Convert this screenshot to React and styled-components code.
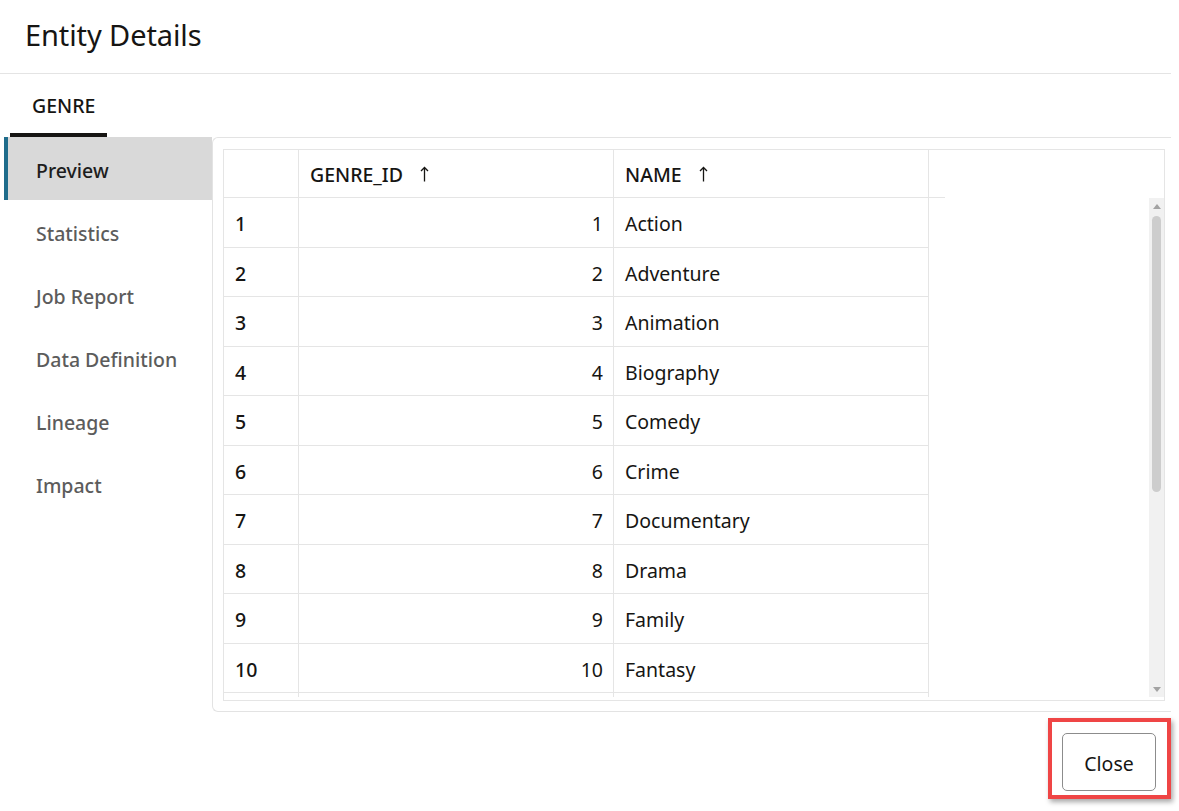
import styled, { createGlobalStyle } from 'styled-components'

const GlobalStyle = createGlobalStyle`
body {
  margin: 0;
  background: #ffffff;
  font-family: "Noto Sans", "Open Sans", sans-serif;
  color: #161513;
}
`

const Dialog = styled.div`
width: 1171px;
height: 811px;
display: flex;
flex-direction: column;
background: #fff;
`

const Header = styled.div`
height: 73px;
box-sizing: content-box;
border-bottom: 1px solid #e4e4e4;
display: flex;
align-items: center;
padding-left: 25px;
`

const Title = styled.h1`
margin: 0 0 4px;
font-size: 29px;
font-weight: 400;
color: #161513;
letter-spacing: -0.1px;
`

const TabBar = styled.div`
height: 63px;
display: flex;
align-items: stretch;
padding-left: 10px;
`

const Tab = styled.div`
width: 97px;
box-sizing: border-box;
padding: 4px 0 0 22px;
display: flex;
align-items: center;
font-size: 19.5px;
font-weight: 500;
color: #161513;
border-bottom: 4px solid ${p => (p.$active ? '#161513' : 'transparent')};
`

const Body = styled.div`
display: flex;
height: 575px;
`

const Nav = styled.nav`
width: 212px;
padding-left: 4px;
box-sizing: border-box;
display: flex;
flex-direction: column;
`

const NavItem = styled.div`
height: 63px;
display: flex;
align-items: center;
box-sizing: border-box;
padding: 3px 0 0 28px;
border-left: 4px solid ${p => (p.$active ? '#1f6c8b' : 'transparent')};
background: ${p => (p.$active ? '#d9d9d9' : 'transparent')};
color: ${p => (p.$active ? '#1d1d1d' : '#5c5c5c')};
font-size: 19.5px;
font-weight: 500;
`

const Panel = styled.div`
flex: 1;
border: 1px solid #e3e3e3;
border-right: none;
border-radius: 6px 0 0 6px;
padding: 11px 6px 10px 10px;
box-sizing: border-box;
`

const Grid = styled.div`
height: 552px;
border: 1px solid #e5e5e5;
box-sizing: border-box;
display: flex;
flex-direction: column;
padding-bottom: 3px;
`

const HeaderRow = styled.div`
display: flex;
width: 721px;
height: 48px;
flex-shrink: 0;
border-bottom: 1px solid #e5e5e5;
box-sizing: border-box;
`

const HeadCell = styled.div`
width: ${p => p.$w}px;
box-sizing: border-box;
border-right: ${p => (p.$last ? 'none' : '1px solid #e5e5e5')};
display: flex;
align-items: center;
padding: 1px 0 0 11px;
font-size: 19.5px;
font-weight: 500;
color: #161513;
gap: 17px;
`

const BodyArea = styled.div`
flex: 1;
display: flex;
overflow: hidden;
`

const Rows = styled.div`
width: 705px;
overflow: hidden;
`

const Row = styled.div`
display: flex;
height: 49.5px;
box-sizing: border-box;
border-bottom: 1px solid #e5e5e5;
`

const Cell = styled.div`
width: ${p => p.$w}px;
box-sizing: border-box;
border-right: 1px solid #e5e5e5;
display: flex;
align-items: center;
justify-content: ${p => (p.$right ? 'flex-end' : 'flex-start')};
padding: ${p => (p.$right ? '3px 10px 0 0' : '3px 0 0 11px')};
font-size: 19.5px;
font-weight: ${p => (p.$bold ? 500 : 400)};
color: #161513;
`

const Filler = styled.div`
flex: 1;
`

const ScrollTrack = styled.div`
width: 15px;
background: #f1f1f1;
display: flex;
flex-direction: column;
align-items: center;
`

const ArrowUp = styled.div`
margin-top: 6px;
width: 0;
height: 0;
border-left: 4px solid transparent;
border-right: 4px solid transparent;
border-bottom: 5px solid #a3a3a3;
`

const Thumb = styled.div`
margin-top: 7px;
width: 9px;
height: 276px;
border-radius: 5px;
background: #cdcdcd;
`

const ArrowDown = styled.div`
margin-top: auto;
margin-bottom: 5px;
width: 0;
height: 0;
border-left: 4px solid transparent;
border-right: 4px solid transparent;
border-top: 5px solid #a3a3a3;
`

const Footer = styled.div`
flex: 1;
display: flex;
justify-content: flex-end;
align-items: flex-start;
padding-top: 6px;
`

const Highlight = styled.div`
border: 4px solid #ef4545;
padding: 11px 11px 4px 10px;
box-shadow: 2px 3px 5px rgba(0, 0, 0, 0.35);
`

const Button = styled.button`
width: 94px;
height: 58px;
border: 1px solid #8c8c8c;
border-radius: 5px;
background: #fff;
font-family: "Noto Sans", "Open Sans", sans-serif;
font-size: 19.5px;
color: #161513;
padding: 2px 0 0;
`

const SortArrow = () => (
  <svg width="9" height="16" viewBox="0 0 9 16" fill="none">
    <path d="M4.5 15.5V1.5M1 5L4.5 1.5L8 5" stroke="#161513" strokeWidth="1.3" />
  </svg>
)

const genres = ['Action', 'Adventure', 'Animation', 'Biography', 'Comedy', 'Crime', 'Documentary', 'Drama', 'Family', 'Fantasy']
const navItems = ['Preview', 'Statistics', 'Job Report', 'Data Definition', 'Lineage', 'Impact']

export default function App() {
  return (
    <>
      <GlobalStyle />
      <Dialog>
        <Header>
          <Title>Entity Details</Title>
        </Header>
        <TabBar>
          <Tab $active>GENRE</Tab>
        </TabBar>
        <Body>
          <Nav>
            {navItems.map((n, i) => (
              <NavItem key={n} $active={i === 0}>{n}</NavItem>
            ))}
          </Nav>
          <Panel>
            <Grid>
              <HeaderRow>
                <HeadCell $w={75} />
                <HeadCell $w={315}>GENRE_ID <SortArrow /></HeadCell>
                <HeadCell $w={315}>NAME <SortArrow /></HeadCell>
                <HeadCell $w={16} $last />
              </HeaderRow>
              <BodyArea>
                <Rows>
                  {genres.map((g, i) => (
                    <Row key={g}>
                      <Cell $w={75} $bold>{i + 1}</Cell>
                      <Cell $w={315} $right>{i + 1}</Cell>
                      <Cell $w={315}>{g}</Cell>
                    </Row>
                  ))}
                  <Row>
                    <Cell $w={75} />
                    <Cell $w={315} />
                    <Cell $w={315} />
                  </Row>
                </Rows>
                <Filler />
                <ScrollTrack>
                  <ArrowUp />
                  <Thumb />
                  <ArrowDown />
                </ScrollTrack>
              </BodyArea>
            </Grid>
          </Panel>
        </Body>
        <Footer>
          <Highlight>
            <Button>Close</Button>
          </Highlight>
        </Footer>
      </Dialog>
    </>
  )
}
